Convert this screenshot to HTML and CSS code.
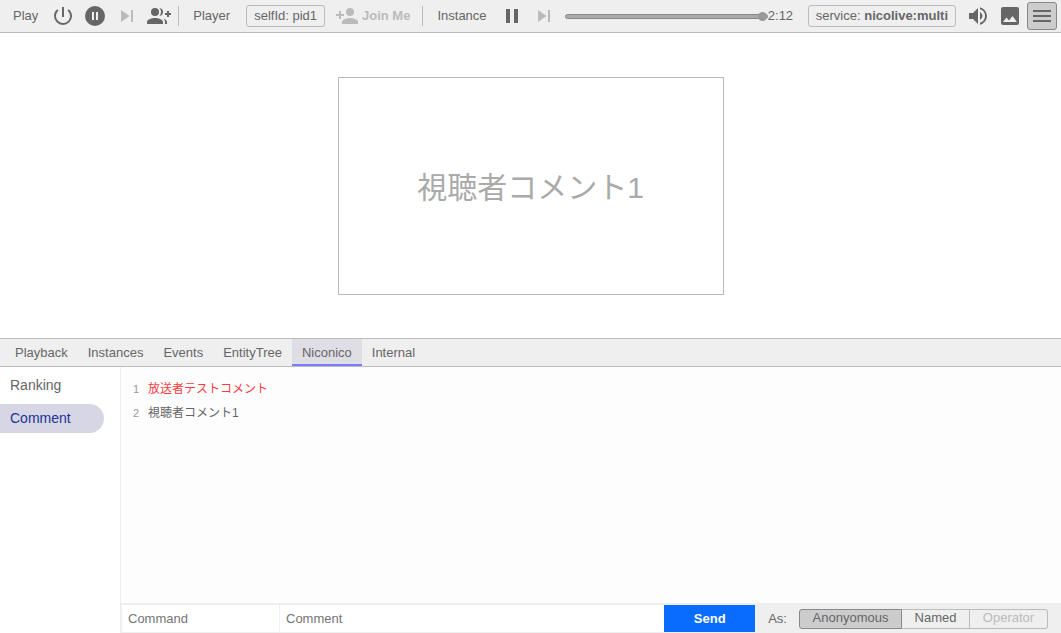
FILE: index.html
```html
<!DOCTYPE html>
<html lang="ja">
<head>
<meta charset="utf-8">
<title>Playground</title>
<link rel="stylesheet" href="styles.css">
</head>
<body>
<header class="toolbar">
  <section class="group">
    <span class="label">Play</span>
    <button class="icon-btn" aria-label="Power"><svg width="24" height="24" viewBox="0 0 24 24"><path d="M13 3h-2v10h2V3zm4.83 2.170-1.420 1.420A6.920 6.920 0 0 1 19 12a7 7 0 1 1-11.420-5.420L6.170 5.170A8.930 8.930 0 0 0 3 12a9 9 0 1 0 18 0c0-2.740-1.230-5.180-3.170-6.830z"/></svg></button>
    <button class="icon-btn" aria-label="Pause all"><svg width="24" height="24" viewBox="0 0 24 24"><path d="M12 2a10 10 0 1 0 0 20 10 10 0 0 0 0-20zm-1 14H9V8h2v8zm4 0h-2V8h2v8z"/></svg></button>
    <button class="icon-btn" aria-label="Step" disabled><svg width="24" height="24" viewBox="0 0 24 24"><path d="M6 18l8.500-6L6 6v12zM16 6v12h2V6h-2z"/></svg></button>
    <button class="icon-btn" aria-label="Add player"><svg width="24" height="24" viewBox="0 0 24 24"><path d="M22 9V7h-2v2h-2v2h2v2h2v-2h2V9z"/><circle cx="8" cy="8" r="4"/><path d="M8 14c-2.670 0-8 1.340-8 4v2h16v-2c0-2.660-5.330-4-8-4zM12.510 4.050C13.430 5.110 14 6.490 14 8s-.57 2.890-1.490 3.950A3.990 3.990 0 0 0 16 8a3.990 3.990 0 0 0-3.490-3.950zM16.530 14.830C17.420 15.660 18 16.700 18 18v2h2v-2c0-1.450-1.590-2.510-3.470-3.170z"/></svg></button>
  </section>
  <section class="group">
    <span class="label">Player</span>
    <button class="box-btn">selfId: pid1</button>
    <button class="join-btn" disabled><svg width="24" height="24" viewBox="0 0 24 24"><path d="M15 12a4 4 0 1 0 0-8 4 4 0 0 0 0 8zm-9-2V7H4v3H1v2h3v3h2v-3h3v-2H6zm9 4c-2.670 0-8 1.340-8 4v2h16v-2c0-2.660-5.330-4-8-4z"/></svg>Join Me</button>
  </section>
  <section class="group group-wide">
    <label class="label" for="seek">Instance</label>
    <button class="icon-btn" aria-label="Pause"><svg width="24" height="24" viewBox="0 0 24 24"><path d="M6 19h4V5H6v14zm8-14v14h4V5h-4z"/></svg></button>
    <button class="icon-btn" aria-label="Step instance" disabled><svg width="24" height="24" viewBox="0 0 24 24"><path d="M6 18l8.500-6L6 6v12zM16 6v12h2V6h-2z"/></svg></button>
    <input class="seek" id="seek" type="range" min="0" max="132" value="132">
    <output class="time" for="seek">2:12</output>
    <button class="box-btn">service: <b>nicolive:multi</b></button>
  </section>
  <section class="group tools">
    <button class="icon-btn" aria-label="Volume"><svg width="24" height="24" viewBox="0 0 24 24"><path d="M3 9v6h4l5 5V4L7 9H3zm13.500 3A4.500 4.500 0 0 0 14 7.970v8.050A4.470 4.470 0 0 0 16.500 12zM14 3.230v2.060a7 7 0 0 1 0 13.420v2.060a9 9 0 0 0 0-17.540z"/></svg></button>
    <button class="icon-btn" aria-label="Background"><svg width="24" height="24" viewBox="0 0 24 24"><path d="M21 19V5a2 2 0 0 0-2-2H5a2 2 0 0 0-2 2v14a2 2 0 0 0 2 2h14a2 2 0 0 0 2-2zM8.500 13.500l2.500 3.010L14.500 12l4.500 6H5l3.500-4.500z"/></svg></button>
    <button class="icon-btn menu-btn" aria-label="Developer tools" aria-pressed="true"><svg width="24" height="24" viewBox="0 0 24 24"><path d="M3 18h18v-2H3v2zm0-5h18v-2H3v2zm0-7v2h18V6H3z"/></svg></button>
  </section>
</header>
<main class="stage">
  <div class="screen">視聴者コメント1</div>
</main>
<section class="devtools">
  <nav class="tabs">
    <button class="tab">Playback</button>
    <button class="tab">Instances</button>
    <button class="tab">Events</button>
    <button class="tab">EntityTree</button>
    <button class="tab tab-active">Niconico</button>
    <button class="tab">Internal</button>
  </nav>
  <div class="body">
    <nav class="side">
      <button class="side-item">Ranking</button>
      <button class="side-item side-active">Comment</button>
    </nav>
    <div class="content">
      <ul class="comments">
        <li class="comment from-owner"><span class="num">1</span><span>放送者テストコメント</span></li>
        <li class="comment"><span class="num">2</span><span>視聴者コメント1</span></li>
      </ul>
      <form class="composer">
        <input class="field command" type="text" placeholder="Command" aria-label="Command">
        <input class="field message" type="text" placeholder="Comment" aria-label="Comment">
        <button class="send" type="button">Send</button>
        <span class="as" id="as">As:</span>
        <div class="segments" role="group" aria-labelledby="as">
          <button class="segment segment-active" type="button">Anonyomous</button>
          <button class="segment" type="button">Named</button>
          <button class="segment" type="button" disabled>Operator</button>
        </div>
      </form>
    </div>
  </div>
</section>
</body>
</html>
```
FILE: styles.css
```css
* { box-sizing: border-box; }
html, body { height: 100%; }
body {
  margin: 0;
  display: flex;
  flex-direction: column;
  background: #fff;
  color: #666;
  font: 13px/20px "Liberation Sans", "Noto Sans CJK JP", sans-serif;
}
button, input { font: inherit; color: inherit; margin: 0; }
button { padding: 0; border: 0; background: none; white-space: nowrap; }
svg { display: block; fill: currentColor; flex: none; }

.toolbar {
  flex: none;
  display: flex;
  align-items: center;
  height: 33px;
  background: #efefef;
  border-bottom: 1px solid #bbb;
}
.group { display: flex; align-items: center; height: 20px; }
.group + .group { border-left: 1px solid #bbb; }
.group:first-child { padding-right: 3px; }
.group-wide { flex: 1; min-width: 0; }
.group + .tools { border-left: 0; padding: 0 4px 0 6px; }
.label { padding: 0 9px 0 13px; }
.group + .group .label { padding: 0 9px 0 14px; }
.icon-btn {
  flex: none;
  display: flex;
  align-items: center;
  justify-content: center;
  width: 32px;
  height: 28px;
}
button:disabled { color: #bbb; }
.box-btn {
  height: 22px;
  padding: 0 7px;
  border: 1px solid #bbb;
  border-radius: 3px;
}
.group + .group .label + .box-btn { margin-left: 7px; }
.join-btn {
  display: flex;
  align-items: center;
  gap: 3px;
  padding: 0 12px 0 10px;
  font-weight: bold;
}
.seek {
  appearance: none;
  flex: 1;
  min-width: 40px;
  height: 9px;
  margin-left: 5px;
  background: none;
}
.seek::-webkit-slider-runnable-track {
  height: 5px;
  background: #aaa;
  border: 1px solid #888;
  border-radius: 3px;
}
.seek::-webkit-slider-thumb {
  appearance: none;
  width: 9px;
  height: 9px;
  margin-top: -3px;
  border-radius: 50%;
  background: #999;
}
.time { width: 40px; }
.menu-btn {
  width: 30px;
  margin-left: 1px;
  background: #ccc;
  border: 1px solid #888;
  border-radius: 3px;
}

.stage {
  flex: 1;
  min-height: 0;
  display: flex;
  align-items: center;
  justify-content: center;
}
.screen {
  display: flex;
  align-items: center;
  justify-content: center;
  width: 386px;
  aspect-ratio: 386 / 218;
  padding-top: 4px;
  border: 1px solid #bbb;
  color: #aaa;
  font-size: 30px;
}

.devtools { flex: none; height: 295px; display: flex; flex-direction: column; }
.tabs {
  flex: none;
  display: flex;
  height: 29px;
  padding-left: 5px;
  background: #efefef;
  border: solid #bbb;
  border-width: 1px 0;
}
.tab { padding: 2px 10px 0; border-bottom: 2px solid transparent; }
.tab-active { background: #dedee4; border-bottom-color: #7b7bff; }
.body { flex: 1; min-height: 0; display: flex; }
.side {
  flex: none;
  display: flex;
  flex-direction: column;
  gap: 4px;
  width: 120px;
  padding: 4px 16px 0 0;
}
.side-item {
  height: 29px;
  padding: 0 0 2px 10px;
  text-align: left;
  font-size: 14px;
  border-radius: 0 15px 15px 0;
}
.side-active { background: #d6d6e4; color: #1c3399; }
.content {
  flex: 1;
  min-width: 0;
  display: flex;
  flex-direction: column;
  background: #fdfdfd;
  border-left: 1px solid #eee;
}
.comments {
  flex: 1;
  margin: 0;
  padding: 10px 0 0;
  list-style: none;
  font-size: 12px;
  line-height: 24px;
}
.comment { display: flex; gap: 9px; }
.from-owner { color: #ff3b3b; }
.num { width: 18px; text-align: right; font-size: 11px; color: #999; }

.composer {
  flex: none;
  display: flex;
  align-items: center;
  height: 30px;
  padding: 2px 13px 1px 1px;
  background: #efefef;
}
.field {
  height: 27px;
  padding: 0 6px;
  border: 0;
  border-radius: 0;
  background: #fff;
}
.field::placeholder { color: #757575; }
.command { width: 157px; margin-right: 1px; }
.message { flex: 1; min-width: 80px; }
.send {
  width: 91px;
  height: 27px;
  background: #0a6cff;
  color: #fff;
  font-weight: bold;
}
.as { padding: 0 12px 0 13px; }
.segments { display: flex; height: 20px; }
.segment {
  width: 68px;
  padding-bottom: 2px;
  border: 1px solid #bbb;
  border-left-width: 0;
  line-height: 16px;
}
.segment:first-child { width: 103px; border-radius: 3px 0 0 3px; }
.segment:last-child { width: 78px; border-radius: 0 3px 3px 0; }
.segment-active { background: #ccc; border: 1px solid #888; }
```
